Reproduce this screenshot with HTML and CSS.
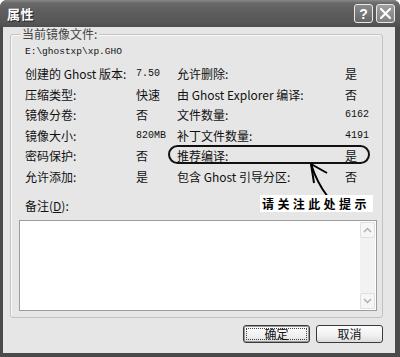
FILE: index.html
```html
<!DOCTYPE html>
<html>
<head>
<meta charset="utf-8">
<link rel="stylesheet" href="styles.css">
</head>
<body>
<div class="window">
  <div class="titlebar">
    <span class="title">属性</span>
    <div class="tb-buttons">
      <span class="tb-btn help">?</span>
      <span class="tb-btn close"><svg width="13" height="13" viewBox="0 0 13 13"><path d="M2 2 L11 11 M11 2 L2 11" stroke="#fff" stroke-width="2.2" stroke-linecap="round"/></svg></span>
    </div>
  </div>
  <div class="body">
    <fieldset class="group">
      <legend>当前镜像文件:</legend>
      <div class="path">E:\ghostxp\xp.GHO</div>
      <div class="grid">
        <span>创建的 Ghost 版本:</span><span class="num">7.50</span><span>允许删除:</span><span>是</span>
        <span>压缩类型:</span><span>快速</span><span>由 Ghost Explorer 编译:</span><span>否</span>
        <span>镜像分卷:</span><span>否</span><span>文件数量:</span><span class="num">6162</span>
        <span>镜像大小:</span><span class="num">820MB</span><span>补丁文件数量:</span><span class="num">4191</span>
        <span>密码保护:</span><span>否</span><span>推荐编译:</span><span>是</span>
        <span>允许添加:</span><span>是</span><span>包含 Ghost 引导分区:</span><span>否</span>
      </div>
      <div class="note-label">备注(<u>D</u>):</div>
      <div class="textarea">
        <div class="scrollbar">
          <span class="sb-btn"><svg width="9" height="6" viewBox="0 0 9 6"><path d="M1 5 L4.5 1.5 L8 5" fill="none" stroke="#b0b0b0" stroke-width="1.5"/></svg></span>
          <span class="sb-track"></span>
          <span class="sb-btn"><svg width="9" height="6" viewBox="0 0 9 6"><path d="M1 1 L4.5 4.5 L8 1" fill="none" stroke="#b0b0b0" stroke-width="1.5"/></svg></span>
        </div>
      </div>
    </fieldset>
    <div class="buttons">
      <button class="btn default"><span class="focus">确定</span></button>
      <button class="btn">取消</button>
    </div>
  </div>
  <div class="oval"></div>
  <svg class="arrow" width="400" height="357" viewBox="0 0 400 357">
    <path d="M311 164 Q317 183 328 197" fill="none" stroke="#000" stroke-width="2"/>
    <path d="M311 164 L314 183 M311 164 L327 173" fill="none" stroke="#000" stroke-width="2"/>
  </svg>
  <div class="callout">请关注此处提示</div>
</div>
</body>
</html>
```
FILE: styles.css
```css
* { box-sizing: border-box; }
html, body { margin: 0; padding: 0; background: #fff; }
body { font-family: "Noto Sans CJK SC", "Liberation Sans", sans-serif; font-size: 12px; color: #111; }

.window {
  position: relative;
  width: 400px;
  height: 357px;
  display: flex;
  flex-direction: column;
  background: #4a4a4a;
  border-radius: 7px 7px 0 0;
  overflow: hidden;
}

.titlebar {
  height: 27px;
  flex: none;
  display: flex;
  align-items: center;
  justify-content: space-between;
  padding: 0 5px 0 7px;
  background: linear-gradient(#8a8a8a 0, #6a6a6a 3px, #5e5e5e 40%, #585858 80%, #4e4e4e 100%);
}
.title {
  color: #fff;
  font-weight: 700;
  font-size: 13px;
  text-shadow: 1px 1px 0 #222;
  letter-spacing: 0.5px;
}
.tb-buttons { display: flex; gap: 3px; }
.tb-btn {
  width: 19px;
  height: 19px;
  border: 1px solid #e8e8e8;
  border-radius: 3px;
  display: flex;
  align-items: center;
  justify-content: center;
  color: #fff;
  font-family: "Liberation Sans", sans-serif;
  font-weight: 700;
  font-size: 14px;
}
.help { background: linear-gradient(#8a8a8a, #666); }
.close { background: linear-gradient(#a0a0a0, #808080); }

.body {
  flex: 1;
  margin: 0 5px 4px 3px;
  background: #e6e6e6;
  padding: 1px 12px 0 7px;
  display: flex;
  flex-direction: column;
}

.group {
  margin: 0;
  padding: 0 0 6px 0;
  border: 1px solid #c2c2c2;
  border-radius: 3px;
  box-shadow: inset 1px 1px 0 #fafafa;
  min-width: 0;
}
.group legend {
  margin-left: 9px;
  padding: 0 2px;
  line-height: 12px;
  font-size: 12px;
  color: #444;
  background: #e6e6e6;
}
.path {
  margin: 5px 0 0 14px;
  font-family: "Liberation Mono", monospace;
  font-size: 9.5px;
  line-height: 14px;
  color: #111;
}
.grid {
  margin: 5px 0 0 14px;
  display: grid;
  grid-template-columns: 111px 41px 168px auto;
  grid-auto-rows: 20.5px;
  align-items: center;
  line-height: 14px;
}
.num { font-family: "Liberation Mono", monospace; font-size: 10px; }
.note-label {
  margin: 12px 0 0 14px;
  line-height: 14px;
}
.textarea {
  margin: 7px 5px 0 8px;
  height: 91px;
  background: #fff;
  border: 1px solid #9c9c9c;
  display: flex;
  justify-content: flex-end;
  padding: 1px;
}
.scrollbar {
  width: 15px;
  display: flex;
  flex-direction: column;
  background: #f2f2f2;
}
.sb-btn {
  height: 16px;
  border: 1px solid #e0e0e0;
  border-radius: 2px;
  background: #f6f6f6;
  display: flex;
  align-items: center;
  justify-content: center;
}
.sb-track { flex: 1; }

.buttons {
  display: flex;
  justify-content: flex-end;
  gap: 6px;
  margin-top: 7px;
}
.btn {
  width: 67px;
  height: 18px;
  padding: 0;
  border: 1px solid #3a3a3a;
  border-radius: 3px;
  background: linear-gradient(#fdfdfd, #f0f0f0 60%, #dcdcdc);
  font-family: "Noto Sans CJK SC", sans-serif;
  font-size: 12px;
  line-height: 14px;
  color: #111;
  display: flex;
  align-items: center;
  justify-content: center;
}
.btn.default {
  box-shadow: inset 0 0 0 1px #9a9a9a;
  padding: 2px;
}
.btn .focus {
  flex: 1;
  align-self: stretch;
  border: 1px dotted #444;
  display: flex;
  align-items: center;
  justify-content: center;
}

.oval {
  position: absolute;
  left: 168px;
  top: 145px;
  width: 202px;
  height: 19px;
  border: 2px solid #111;
  border-radius: 10px;
}
.arrow { position: absolute; left: 0; top: 0; pointer-events: none; }
.callout {
  position: absolute;
  left: 260px;
  top: 195px;
  width: 113px;
  height: 17px;
  background: #fff;
  font-weight: 700;
  font-size: 12px;
  line-height: 17px;
  letter-spacing: 3.4px;
  padding-left: 2px;
  color: #000;
}
```
